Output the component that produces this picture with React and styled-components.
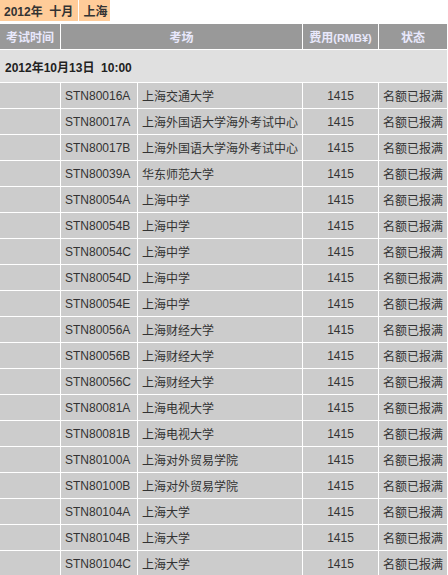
import React from 'react';
import styled, { createGlobalStyle } from 'styled-components';

const GlobalStyle = createGlobalStyle`
  body {
    margin: 0;
    background: #ffffff;
    font-family: 'Liberation Sans', 'Noto Sans CJK SC', sans-serif;
    font-size: 12px;
  }
`;

const rooms = [
  ['STN80016A', '上海交通大学'],
  ['STN80017A', '上海外国语大学海外考试中心'],
  ['STN80017B', '上海外国语大学海外考试中心'],
  ['STN80039A', '华东师范大学'],
  ['STN80054A', '上海中学'],
  ['STN80054B', '上海中学'],
  ['STN80054C', '上海中学'],
  ['STN80054D', '上海中学'],
  ['STN80054E', '上海中学'],
  ['STN80056A', '上海财经大学'],
  ['STN80056B', '上海财经大学'],
  ['STN80056C', '上海财经大学'],
  ['STN80081A', '上海电视大学'],
  ['STN80081B', '上海电视大学'],
  ['STN80100A', '上海对外贸易学院'],
  ['STN80100B', '上海对外贸易学院'],
  ['STN80104A', '上海大学'],
  ['STN80104B', '上海大学'],
  ['STN80104C', '上海大学'],
];

const Tabs = styled.div`
  display: flex;
  gap: 1px;
  height: 21px;
  margin-bottom: 3px;
`;

const Tab = styled.div`
  display: flex;
  align-items: center;
  padding: 0 ${(props) => props.pad}px 0 4px;
  background: #ffcc99;
  color: #333333;
  font-weight: bold;
  white-space: pre;
`;

const Table = styled.table`
  width: 448px;
  table-layout: fixed;
  border-collapse: separate;
  border-spacing: 0;
`;

const Cell = styled.td`
  border-right: 1px solid #ffffff;
  border-bottom: 1px solid #ffffff;
  padding: 0 4px;
  white-space: nowrap;
  overflow: hidden;
`;

const HeadCell = styled(Cell).attrs({ as: 'th' })`
  height: 25px;
  background: #999999;
  color: #e8e8fc;
  font-weight: bold;
  text-align: center;
  padding: 0;
`;

const Unit = styled.span`
  font-size: 11px;
`;

const DateCell = styled(Cell)`
  height: 32px;
  background: #e0e0e0;
  color: #222222;
  font-weight: bold;
  padding-left: 5px;
`;

const DataCell = styled(Cell)`
  height: 25px;
  background: #cccccc;
  color: #333333;
  text-align: ${(props) => props.align || 'left'};
  padding: 0 ${(props) => (props.align === 'center' ? 0 : 4)}px;
`;

export default function App() {
  return (
    <>
      <GlobalStyle />
      <Tabs>
        <Tab pad={5}>2012年  十月</Tab>
        <Tab pad={3}>上海</Tab>
      </Tabs>
      <Table>
        <colgroup>
          <col style={{ width: 61 }} />
          <col style={{ width: 77 }} />
          <col style={{ width: 165 }} />
          <col style={{ width: 76 }} />
          <col style={{ width: 69 }} />
        </colgroup>
        <thead>
          <tr>
            <HeadCell>考试时间</HeadCell>
            <HeadCell colSpan={2}>考场</HeadCell>
            <HeadCell>
              费用<Unit>(RMB¥)</Unit>
            </HeadCell>
            <HeadCell>状态</HeadCell>
          </tr>
        </thead>
        <tbody>
          <tr>
            <DateCell colSpan={5}>2012年10月13日&nbsp;&nbsp;10:00</DateCell>
          </tr>
          {rooms.map(([code, name]) => (
            <tr key={code}>
              <DataCell />
              <DataCell>{code}</DataCell>
              <DataCell>{name}</DataCell>
              <DataCell align="center">1415</DataCell>
              <DataCell align="center">名额已报满</DataCell>
            </tr>
          ))}
        </tbody>
      </Table>
    </>
  );
}
